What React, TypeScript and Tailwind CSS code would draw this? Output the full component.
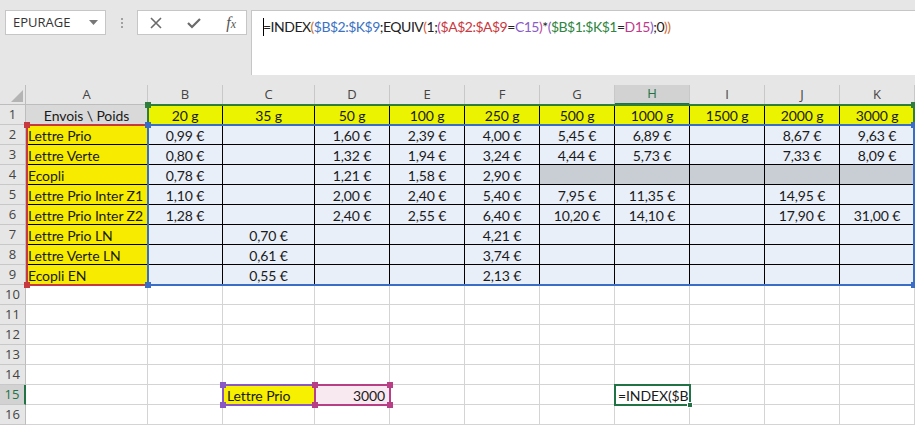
import React from "react";

const COLS = ["A", "B", "C", "D", "E", "F", "G", "H", "I", "J", "K"];
const gridTemplate = "grid grid-cols-[26px_122px_75px_92px_75px_75px_75px_75px_75px_75px_75px_75px]";

const headers = ["Envois \\ Poids", "20 g", "35 g", "50 g", "100 g", "250 g", "500 g", "1000 g", "1500 g", "2000 g", "3000 g"];

const data: [string, string[]][] = [
  ["Lettre Prio", ["0,99 €", "", "1,60 €", "2,39 €", "4,00 €", "5,45 €", "6,89 €", "", "8,67 €", "9,63 €"]],
  ["Lettre Verte", ["0,80 €", "", "1,32 €", "1,94 €", "3,24 €", "4,44 €", "5,73 €", "", "7,33 €", "8,09 €"]],
  ["Ecopli", ["0,78 €", "", "1,21 €", "1,58 €", "2,90 €", "", "", "", "", ""]],
  ["Lettre Prio Inter Z1", ["1,10 €", "", "2,00 €", "2,40 €", "5,40 €", "7,95 €", "11,35 €", "", "14,95 €", ""]],
  ["Lettre Prio Inter Z2", ["1,28 €", "", "2,40 €", "2,55 €", "6,40 €", "10,20 €", "14,10 €", "", "17,90 €", "31,00 €"]],
  ["Lettre Prio LN", ["", "0,70 €", "", "", "4,21 €", "", "", "", "", ""]],
  ["Lettre Verte LN", ["", "0,61 €", "", "", "3,74 €", "", "", "", "", ""]],
  ["Ecopli EN", ["", "0,55 €", "", "", "2,13 €", "", "", "", "", ""]],
];

const cellFont = "font-['Lato',sans-serif] text-[14px] tracking-[-0.1px] text-[#1a1a1a] whitespace-nowrap pt-[2px]";

function RowHeader({ n, active }: { n: number; active?: boolean }) {
  return (
    <div
      className={
        "h-5 flex items-center justify-center border-b border-[#c8c8c8] font-['Open_Sans',sans-serif] text-[13px] " +
        (active
          ? "bg-[#d2d2d2] text-[#217346] border-r-2 border-r-[#217346]"
          : "bg-[#e6e6e6] text-[#444] border-r border-r-[#bdbdbd]")
      }
    >
      {n}
    </div>
  );
}

function Handle({ pos, color }: { pos: string; color: string }) {
  return <div className={"absolute w-[6px] h-[6px] " + pos} style={{ background: color }} />;
}

function Outline({
  left,
  top,
  width,
  height,
  color,
}: {
  left: number;
  top: number;
  width: number;
  height: number;
  color: string;
}) {
  return (
    <div
      className="absolute pointer-events-none"
      style={{ left, top, width, height, border: `2px solid ${color}` }}
    >
      <Handle pos="-left-[4px] -top-[4px]" color={color} />
      <Handle pos="-right-[4px] -top-[4px]" color={color} />
      <Handle pos="-left-[4px] -bottom-[4px]" color={color} />
      <Handle pos="-right-[4px] -bottom-[4px]" color={color} />
    </div>
  );
}

export default function App() {
  const rowsBelow = [10, 11, 12, 13, 14, 15, 16];
  return (
    <div className="w-[915px] h-[425px] overflow-hidden bg-[#e6e6e6] select-none">
      {/* Top formula area */}
      <div className="h-[85px] flex items-start pt-[10px] pl-[5px]">
        <div className="w-[101px] h-[25px] bg-white border border-[#c6c6c6] flex items-center justify-between pl-[7px] pr-[7px] font-['Open_Sans',sans-serif] text-[13px] text-[#333]">
          <span>EPURAGE</span>
          <svg width="9" height="5" viewBox="0 0 9 5">
            <path d="M0 0 L9 0 L4.5 5 Z" fill="#777" />
          </svg>
        </div>
        <div className="w-[31px] h-[25px] flex flex-col items-center justify-center gap-[2px]">
          <div className="w-[2px] h-[2px] bg-[#a0a0a0]" />
          <div className="w-[2px] h-[2px] bg-[#a0a0a0]" />
          <div className="w-[2px] h-[2px] bg-[#a0a0a0]" />
        </div>
        <div className="w-[110px] h-[25px] bg-white border border-[#c6c6c6] flex items-center justify-between pl-[12px] pr-[10px]">
          <svg width="12" height="12" viewBox="0 0 12 12">
            <path d="M1 1 L11 11 M11 1 L1 11" stroke="#6a6a6a" strokeWidth="1.6" />
          </svg>
          <svg width="14" height="12" viewBox="0 0 14 12">
            <path d="M1 6 L5 10 L13 2" stroke="#6a6a6a" strokeWidth="2.2" fill="none" />
          </svg>
          <span className="font-['Liberation_Serif',serif] italic text-[16px] text-[#555] leading-none">
            f<span className="text-[12px]">x</span>
          </span>
        </div>
        <div className="ml-[4px] flex-1 h-[65px] bg-white border-l border-t border-[#c6c6c6] pl-[11px] pt-[5px]">
          <div className="flex items-center font-['Lato',sans-serif] text-[14px] tracking-[-0.5px] text-[#222] whitespace-pre">
            <span className="w-px h-[18px] bg-black -mr-px" />
            <span>=INDEX</span>
            <span className="text-[#c9742a]">(</span>
            <span className="text-[#3b72c4]">$B$2:$K$9</span>
            <span>;EQUIV</span>
            <span className="text-[#e0603a]">(</span>
            <span>1;</span>
            <span className="text-[#c2479a]">(</span>
            <span className="text-[#c9383c]">$A$2:$A$9</span>
            <span>=</span>
            <span className="text-[#8a5cc6]">C15</span>
            <span className="text-[#c2479a]">)</span>
            <span>*</span>
            <span className="text-[#8a5cc6]">(</span>
            <span className="text-[#2e8540]">$B$1:$K$1</span>
            <span>=</span>
            <span className="text-[#c0398a]">D15</span>
            <span className="text-[#8a5cc6]">)</span>
            <span>;0</span>
            <span className="text-[#e0603a]">)</span>
            <span className="text-[#c9742a]">)</span>
          </div>
        </div>
      </div>

      {/* Sheet */}
      <div className="relative bg-white">
        {/* Column headers */}
        <div className={gridTemplate}>
          <div className="h-5 bg-[#e6e6e6] border-r border-b border-[#bdbdbd] relative">
            <svg className="absolute right-[2px] bottom-[2px]" width="12" height="12" viewBox="0 0 12 12">
              <path d="M12 0 L12 12 L0 12 Z" fill="#b4b4b4" />
            </svg>
          </div>
          {COLS.map((c) => (
            <div
              key={c}
              className={
                "h-5 flex items-center justify-center font-['Open_Sans',sans-serif] text-[13px] border-r border-r-[#c8c8c8] " +
                (c === "H"
                  ? "bg-[#d2d2d2] text-[#217346] border-b-2 border-b-[#217346]"
                  : "bg-[#e6e6e6] text-[#444] border-b border-b-[#bdbdbd]")
              }
            >
              {c}
            </div>
          ))}
        </div>

        {/* Row 1 */}
        <div className={gridTemplate}>
          <RowHeader n={1} />
          {headers.map((h, i) => (
            <div
              key={i}
              className={
                "h-5 flex items-center justify-center border-r border-b border-black " +
                cellFont +
                (i === 0 ? " bg-[#d9d9d9]" : " bg-[#ebf300]")
              }
            >
              {h}
            </div>
          ))}
        </div>

        {/* Rows 2-9 */}
        {data.map(([label, vals], r) => (
          <div key={label} className={gridTemplate}>
            <RowHeader n={r + 2} />
            <div className={"h-5 flex items-center pl-[2px] bg-[#f7ec00] border-r border-b border-black overflow-hidden " + cellFont}>
              {label}
            </div>
            {vals.map((v, i) => {
              const gray = r === 2 && i >= 5;
              return (
                <div
                  key={i}
                  className={
                    "h-5 flex items-center justify-center border-r border-b border-black " +
                    cellFont +
                    (gray ? " bg-[#c9cdd4]" : " bg-[#e9eff8]")
                  }
                >
                  {v}
                </div>
              );
            })}
          </div>
        ))}

        {/* Rows 10-16 */}
        {rowsBelow.map((n) => (
          <div key={n} className={gridTemplate}>
            <RowHeader n={n} active={n === 15} />
            {COLS.map((c) => {
              let content: React.ReactNode = null;
              let extra = "";
              if (n === 15 && c === "C") {
                content = "Lettre Prio";
                extra = " bg-[#f7f000] justify-start pl-[4px]";
              } else if (n === 15 && c === "D") {
                content = "3000";
                extra = " bg-[#f8e9f0] justify-end pr-[4px]";
              } else if (n === 15 && c === "H") {
                content = "=INDEX($B";
                extra = " justify-start pl-[3px] overflow-hidden";
              }
              return (
                <div
                  key={c}
                  className={"h-5 flex items-center border-r border-b border-[#d4d4d4] " + cellFont + extra}
                >
                  {content}
                </div>
              );
            })}
          </div>
        ))}

        {/* Reference outlines */}
        <Outline left={26} top={39} width={123} height={162} color="#c6393f" />
        <Outline left={147} top={19} width={768} height={22} color="#2e7d3a" />
        <Outline left={147} top={39} width={768} height={162} color="#3a6ec6" />
        <Outline left={222} top={299} width={94} height={22} color="#8a58c4" />
        <Outline left={314} top={299} width={77} height={22} color="#b83f86" />
        {/* Active cell H15 */}
        <div className="absolute pointer-events-none border-2 border-[#217346]" style={{ left: 614, top: 299, width: 77, height: 22 }}>
          <div className="absolute -right-[4px] -bottom-[4px] w-[6px] h-[6px] bg-[#217346] border border-white" />
        </div>
      </div>
    </div>
  );
}
